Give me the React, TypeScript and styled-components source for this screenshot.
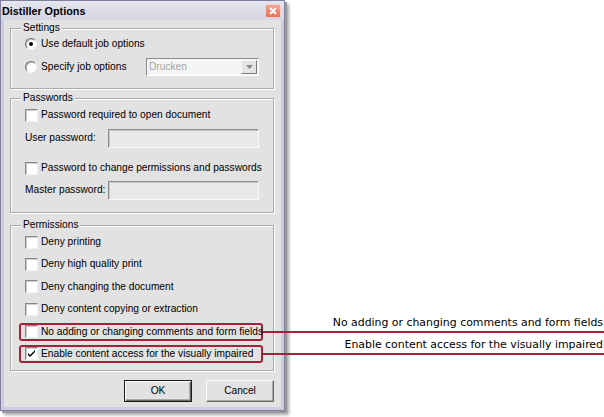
import React from 'react';
import styled, { createGlobalStyle, css } from 'styled-components';

const GlobalStyle = createGlobalStyle`
html, body {
    margin: 0;
    padding: 0;
    background: #ffffff;
    overflow: hidden;
}
body {
    font-family: "Liberation Sans", Arial, sans-serif;
    color: #000;
}
`;

const Page = styled.div`
width: 604px;
height: 417px;
position: relative;
`;

const Window = styled.div`
width: 285px;
height: 411px;
box-sizing: border-box;
border: 1px solid #7f7f9e;
background: #cdcde0;
box-shadow: 2px 2px 0 #9a9a9a, 4px 4px 3px rgba(0, 0, 0, 0.35);
display: flex;
flex-direction: column;
`;

const TitleBar = styled.div`
height: 19px;
flex: none;
display: flex;
align-items: center;
justify-content: space-between;
padding: 0 3px 0 1px;
background: linear-gradient(#e6e6f0, #d4d4e3);
font: bold 10.8px "Liberation Sans", Arial, sans-serif;
`;

const CloseButton = styled.div`
width: 16px;
height: 14px;
box-sizing: border-box;
border: 1px solid #f6d0c8;
border-radius: 2px;
background: linear-gradient(#f2a694, #e2705a);
display: flex;
align-items: center;
justify-content: center;
`;

const Body = styled.div`
flex: 1;
margin: 0 3px 3px;
padding: 2px 7px 0 6px;
background: #e3e2e2;
display: flex;
flex-direction: column;
font-size: 10.2px;
line-height: 12px;
`;

const GroupBox = styled.fieldset<{ $top: number; $bottom: number; $gap: number; $spacing?: number }>`
margin: ${({ $spacing }) => $spacing ?? 0}px 0 0;
padding: ${({ $top }) => $top}px 14px ${({ $bottom }) => $bottom}px 8px;
min-width: 0;
border: 1px solid #a9a9a9;
box-shadow: inset 1px 1px 0 #fff, 1px 1px 0 #fff;
display: flex;
flex-direction: column;
gap: ${({ $gap }) => $gap}px;
`;

const GroupTitle = styled.legend`
margin-left: 2px;
padding: 0 2px;
line-height: 12px;
background: #e3e2e2;
`;

const Row = styled.div<{ $highlight?: boolean; $height?: number; $spaceBefore?: number }>`
position: relative;
height: ${({ $height }) => $height ?? 20}px;
margin-top: ${({ $spaceBefore }) => $spaceBefore ?? 0}px;
padding-left: 6px;
display: flex;
align-items: center;
white-space: nowrap;
${({ $highlight }) => $highlight && css`
    margin-right: -4px;
    border-radius: 3px;
    box-shadow: inset 0 0 0 2px #a3243a;
`}
`;

const FieldRow = styled.div<{ $spaceBefore?: number }>`
height: 20px;
margin-top: ${({ $spaceBefore }) => $spaceBefore ?? 0}px;
padding-left: 6px;
display: grid;
grid-template-columns: 83px 1fr;
align-items: center;
white-space: nowrap;
`;

const RadioMark = styled.span<{ $checked?: boolean }>`
width: 12px;
height: 12px;
box-sizing: border-box;
flex: none;
margin-right: 4px;
border-radius: 50%;
border: 1px solid;
border-color: #6e6e6e #f4f4f4 #f4f4f4 #6e6e6e;
box-shadow: inset 1px 1px 0 #c4c4c4;
background: #fff;
display: flex;
align-items: center;
justify-content: center;
&::after {
    content: '';
    width: 4px;
    height: 4px;
    border-radius: 50%;
    background: ${({ $checked }) => $checked ? '#000' : 'transparent'};
}
`;

const CheckMark = styled.span`
width: 13px;
height: 13px;
box-sizing: border-box;
flex: none;
margin-right: 3px;
border: 1px solid;
border-color: #868686 #f2f2f2 #f2f2f2 #868686;
box-shadow: inset 1px 1px 0 #cfcfcf;
background: #fff;
display: flex;
align-items: center;
justify-content: center;
`;

const Select = styled.div`
width: 113px;
height: 18px;
margin-left: auto;
box-sizing: border-box;
border: 1px solid;
border-color: #8a8a8a #fdfdfd #fdfdfd #8a8a8a;
background: #f5f5f5;
display: flex;
align-items: center;
justify-content: space-between;
padding: 0 1px 0 2px;
color: #a3a3a3;
`;

const SelectArrow = styled.span`
width: 16px;
height: 14px;
box-sizing: border-box;
border: 1px solid;
border-color: #f8f8f8 #7a7a7a #7a7a7a #f8f8f8;
background: #e4e4e4;
display: flex;
align-items: center;
justify-content: center;
`;

const TextInput = styled.div`
height: 19px;
box-sizing: border-box;
border: 1px solid;
border-color: #8c8c8c #fbfbfb #fbfbfb #8c8c8c;
box-shadow: inset 1px 1px 0 #c9c9c9;
background: #e9e9e9;
`;

const ButtonBar = styled.div`
margin-top: 9px;
display: flex;
justify-content: flex-end;
gap: 14px;
`;

const Button = styled.div<{ $default?: boolean }>`
width: 68px;
height: 22px;
box-sizing: border-box;
display: flex;
align-items: center;
justify-content: center;
background: #e3e2e2;
border: 1px solid;
border-color: #fdfdfd #6a6a6a #6a6a6a #fdfdfd;
box-shadow: inset -1px -1px 0 #a8a8a8;
${({ $default }) => $default && css`
    border: 1px solid #1a1a1a;
    box-shadow: inset 1px 1px 0 #fdfdfd, inset -1px -1px 0 #6a6a6a, inset -2px -2px 0 #a8a8a8;
`}
`;

const Callout = styled.div<{ $width: number }>`
position: absolute;
left: 100%;
top: 50%;
margin-top: -1px;
width: ${({ $width }) => $width}px;
height: 2px;
background: #a3243a;
`;

const CalloutLabel = styled.span`
position: absolute;
right: 1px;
bottom: 3px;
font: 10.9px "DejaVu Sans", Verdana, sans-serif;
line-height: 14px;
white-space: nowrap;
`;

const Tick = () => (
    <svg width="9" height="9" viewBox="0 0 9 9">
        <path d="M1 4 L3 6 L8 1 L8 3 L3 8 L1 6 Z" fill="#000" />
    </svg>
);

const Checkbox: React.FC<{ checked?: boolean }> = ({ checked }) => (
    <CheckMark>{checked && <Tick />}</CheckMark>
);

const permissions = [
    { label: 'Deny printing' },
    { label: 'Deny high quality print' },
    { label: 'Deny changing the document' },
    { label: 'Deny content copying or extraction' },
    { label: 'No adding or changing comments and form fields', callout: true },
    { label: 'Enable content access for the visually impaired', callout: true, checked: true },
];

const App: React.FC = () => {
    return (
        <Page>
            <GlobalStyle />
            <Window>
                <TitleBar>
                    <span>Distiller Options</span>
                    <CloseButton>
                        <svg width="8" height="8" viewBox="0 0 8 8">
                            <path d="M1 1 L7 7 M7 1 L1 7" stroke="#fff" strokeWidth="1.8" />
                        </svg>
                    </CloseButton>
                </TitleBar>
                <Body>
                    <GroupBox $top={0} $bottom={11} $gap={3}>
                        <GroupTitle>Settings</GroupTitle>
                        <Row>
                            <RadioMark $checked />
                            Use default job options
                        </Row>
                        <Row>
                            <RadioMark />
                            Specify job options
                            <Select>
                                Drucken
                                <SelectArrow>
                                    <svg width="7" height="4" viewBox="0 0 7 4">
                                        <path d="M0 0 H7 L3.5 4 Z" fill="#8a8a8a" />
                                    </svg>
                                </SelectArrow>
                            </Select>
                        </Row>
                    </GroupBox>

                    <GroupBox $top={1} $bottom={12} $gap={0} $spacing={3}>
                        <GroupTitle>Passwords</GroupTitle>
                        <Row>
                            <Checkbox />
                            Password required to open document
                        </Row>
                        <FieldRow $spaceBefore={3}>
                            User password:
                            <TextInput />
                        </FieldRow>
                        <Row $spaceBefore={10}>
                            <Checkbox />
                            Password to change permissions and passwords
                        </Row>
                        <FieldRow $spaceBefore={2}>
                            Master password:
                            <TextInput />
                        </FieldRow>
                    </GroupBox>

                    <GroupBox $top={2} $bottom={7} $gap={4.4} $spacing={6}>
                        <GroupTitle>Permissions</GroupTitle>
                        {permissions.map((item) => (
                            <Row key={item.label} $height={18} $highlight={item.callout}>
                                <Checkbox checked={item.checked} />
                                {item.label}
                                {item.callout && (
                                    <Callout $width={341}>
                                        <CalloutLabel>{item.label}</CalloutLabel>
                                    </Callout>
                                )}
                            </Row>
                        ))}
                    </GroupBox>

                    <ButtonBar>
                        <Button $default>OK</Button>
                        <Button>Cancel</Button>
                    </ButtonBar>
                </Body>
            </Window>
        </Page>
    );
};

export default App;
